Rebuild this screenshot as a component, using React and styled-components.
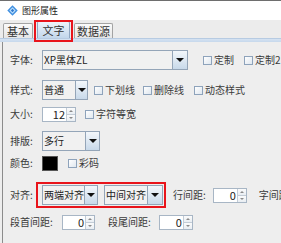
import React from 'react';
import styled, { createGlobalStyle } from 'styled-components';

const Global = createGlobalStyle`
  html, body { margin: 0; padding: 0; background: #eeeeee; }
  body {
    font-family: "Noto Sans CJK SC", "Noto Sans", sans-serif;
    font-size: 10px;
    color: #333;
    width: 281px;
    height: 243px;
    overflow: hidden;
  }
`;

const Window = styled.div`
  width: 281px;
  height: 243px;
  display: flex;
  flex-direction: column;
  background: #eeeeee;
  overflow: hidden;
`;

const TitleBar = styled.div`
  height: 19px;
  border-top: 1px solid #6e6e6e;
  background: #ffffff;
  display: flex;
  align-items: center;
  padding-left: 7px;
  gap: 4px;
  font-size: 9px;
  color: #222;
  line-height: 1;
`;

const TabStrip = styled.div`
  height: 18px;
  display: flex;
  align-items: flex-end;
  padding-left: 3px;
  gap: 4px;
  background: #ececec;
`;

const Tab = styled.div`
  position: relative;
  width: ${p => p.$w}px;
  height: ${p => (p.$active ? 17 : 15)}px;
  box-sizing: border-box;
  border: 1px solid ${p => (p.$active ? '#8fa6c1' : '#a3a3a3')};
  border-bottom: none;
  border-radius: 2px 2px 0 0;
  background: ${p =>
    p.$active
      ? 'linear-gradient(#eef4fb, #c2d6eb)'
      : 'linear-gradient(#fafafa, #e6e6e6)'};
  display: flex;
  align-items: center;
  justify-content: center;
  font-size: 11px;
  line-height: 1;
  color: #333;
`;

const TabMark = styled.div`
  position: absolute;
  left: -4px;
  right: -4px;
  top: -2px;
  bottom: -4px;
  border: 2px solid #e8141b;
  pointer-events: none;
`;

const TabBand = styled.div`
  height: 3px;
  border-top: 1px solid #b7cbe2;
  background: linear-gradient(#d6e3f2, #c6d8ec);
`;

const Content = styled.div`
  flex: 1;
  margin-left: 2px;
  border-left: 1px solid #8c8c8c;
  padding-left: 7px;
  display: flex;
  flex-direction: column;
`;

const Row = styled.div`
  display: flex;
  align-items: center;
  height: ${p => p.$h}px;
  margin-top: ${p => p.$mt}px;
  white-space: nowrap;
`;

const Label = styled.span`
  width: ${p => p.$w || 32}px;
  flex: none;
  line-height: 1;
  color: #3a3a3a;
`;

const Text = styled.span`
  margin-left: ${p => p.$ml || 0}px;
  line-height: 1;
  color: #3a3a3a;
  flex: none;
`;

const ComboBox = styled.div`
  width: ${p => p.$w}px;
  height: 20px;
  box-sizing: border-box;
  border: 1px solid #94a5b8;
  background: #f1f1f1;
  display: flex;
  flex: none;
`;

const ComboText = styled.div`
  flex: 1;
  display: flex;
  align-items: center;
  padding-left: 1px;
  line-height: 1;
  color: #222;
  overflow: hidden;
`;

const ArrowBtn = styled.div`
  width: ${p => p.$w}px;
  border-left: 1px solid #94a5b8;
  background: linear-gradient(#f3f7fb, #c8d9ea);
  display: flex;
  align-items: center;
  justify-content: center;
  flex: none;
`;

const Tri = styled.div`
  width: 0;
  height: 0;
  border-left: 4px solid transparent;
  border-right: 4px solid transparent;
  border-top: 4px solid #111;
`;

const Combo = ({ w, aw, children }) => (
  <ComboBox $w={w}>
    <ComboText>{children}</ComboText>
    <ArrowBtn $w={aw}>
      <Tri />
    </ArrowBtn>
  </ComboBox>
);

const SpinBox = styled.div`
  width: ${p => p.$w}px;
  height: 15px;
  box-sizing: border-box;
  border: 1px solid #a8b6c5;
  background: #fff;
  display: flex;
  flex: none;
  margin-left: ${p => p.$ml || 0}px;
`;

const SpinText = styled.div`
  flex: 1;
  display: flex;
  align-items: center;
  justify-content: flex-end;
  padding-right: 1px;
  font-size: 11px;
  line-height: 1;
  color: #222;
`;

const SpinBtns = styled.div`
  width: 8px;
  border-left: 1px solid #c3ccd6;
  display: flex;
  flex-direction: column;
`;

const SpinBtn = styled.div`
  flex: 1;
  display: flex;
  align-items: center;
  justify-content: center;
  background: linear-gradient(#fbfbfb, #e9eef3);
  & + & { border-top: 1px solid #c3ccd6; }
`;

const SmallTri = styled.div`
  width: 0;
  height: 0;
  border-left: 2px solid transparent;
  border-right: 2px solid transparent;
  ${p => (p.$up ? 'border-bottom: 2px solid #8a8a8a;' : 'border-top: 2px solid #8a8a8a;')}
`;

const Spinner = ({ w, ml, value }) => (
  <SpinBox $w={w} $ml={ml}>
    <SpinText>{value}</SpinText>
    <SpinBtns>
      <SpinBtn><SmallTri $up /></SpinBtn>
      <SpinBtn><SmallTri /></SpinBtn>
    </SpinBtns>
  </SpinBox>
);

const CheckWrap = styled.span`
  display: flex;
  align-items: center;
  margin-left: ${p => p.$ml || 0}px;
  line-height: 1;
  color: #3a3a3a;
  flex: none;
`;

const CheckBox = styled.span`
  width: 9px;
  height: 9px;
  box-sizing: border-box;
  border: 1px solid #8ea3bb;
  background: linear-gradient(135deg, #ffffff, #dfe7ef);
  margin-right: 2px;
  flex: none;
`;

const Check = ({ ml, children }) => (
  <CheckWrap $ml={ml}>
    <CheckBox />
    {children}
  </CheckWrap>
);

const Swatch = styled.div`
  width: 16px;
  height: 15px;
  box-sizing: border-box;
  border: 1px solid #555;
  background: #000;
  flex: none;
`;

const RedFrame = styled.div`
  display: flex;
  align-items: center;
  gap: 6px;
  border: 2px solid #e8141b;
  padding: 1px 1px 1px 4px;
  flex: none;
`;

const Icon = () => (
  <svg width="11" height="11" viewBox="0 0 11 11">
    <path d="M5.5 0.3 L10.7 5.5 L5.5 10.7 L0.3 5.5 Z" fill="#3f8fe0" />
    <path d="M5.5 2.3 L8.7 5.5 L5.5 8.7 L2.3 5.5 Z" fill="#bfe0fb" />
    <path d="M5.5 3.8 L7.2 5.5 L5.5 7.2 L3.8 5.5 Z" fill="#2f7ad0" />
  </svg>
);

export default function App() {
  return (
    <>
      <Global />
      <Window>
        <TitleBar>
          <Icon />
          <span>图形属性</span>
        </TitleBar>
        <TabStrip>
          <Tab $w={30}>基本</Tab>
          <Tab $w={33} $active>
            文字
            <TabMark />
          </Tab>
          <Tab $w={39}>数据源</Tab>
        </TabStrip>
        <TabBand />
        <Content>
          <Row $h={20} $mt={8}>
            <Label>字体:</Label>
            <Combo w={146} aw={14}>XP黑体ZL</Combo>
            <Check ml={15}>定制</Check>
            <Check ml={10}>定制2</Check>
          </Row>
          <Row $h={20} $mt={10}>
            <Label>样式:</Label>
            <Combo w={46} aw={11}>普通</Combo>
            <Check ml={6}>下划线</Check>
            <Check ml={8}>删除线</Check>
            <Check ml={10}>动态样式</Check>
          </Row>
          <Row $h={18} $mt={5}>
            <Label>大小:</Label>
            <Spinner w={34} value="12" />
            <Check ml={9}>字符等宽</Check>
          </Row>
          <Row $h={20} $mt={8}>
            <Label>排版:</Label>
            <Combo w={58} aw={13}>多行</Combo>
          </Row>
          <Row $h={18} $mt={3}>
            <Label>颜色:</Label>
            <Swatch />
            <Check ml={10}>彩码</Check>
          </Row>
          <Row $h={26} $mt={10}>
            <Label $w={26}>对齐:</Label>
            <RedFrame>
              <Combo w={56} aw={12}>两端对齐</Combo>
              <Combo w={59} aw={14}>中间对齐</Combo>
            </RedFrame>
            <Text $ml={7}>行间距:</Text>
            <Spinner w={34} ml={7} value="0" />
            <Text $ml={12}>字间距:</Text>
          </Row>
          <Row $h={18} $mt={5}>
            <Label $w={52}>段首间距:</Label>
            <Spinner w={33} value="0" />
            <Text $ml={13}>段尾间距:</Text>
            <Spinner w={34} ml={8} value="0" />
          </Row>
        </Content>
      </Window>
    </>
  );
}
